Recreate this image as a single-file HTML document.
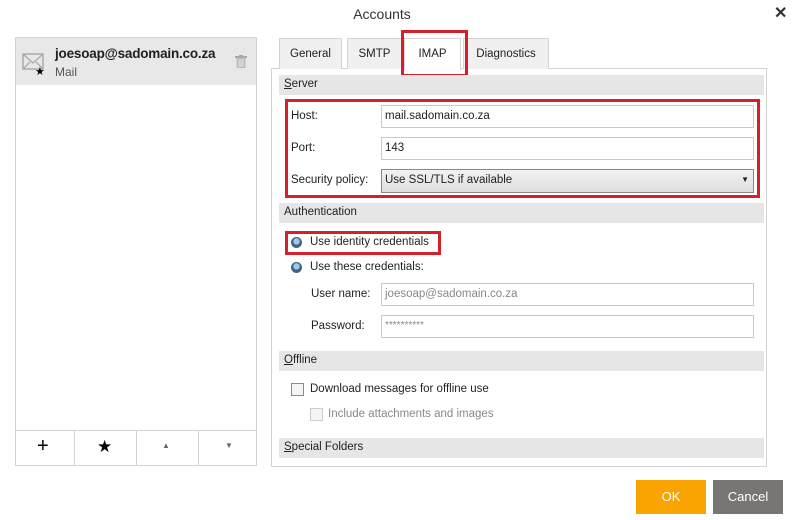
<!DOCTYPE html>
<html><head><meta charset="utf-8"><style>
*{box-sizing:border-box;margin:0;padding:0}
body{width:799px;height:520px;background:#fff;font-family:"Liberation Sans",sans-serif;font-size:11.5px;color:#222;position:relative;overflow:hidden}
.a{position:absolute}
.hdr{position:absolute;left:279px;width:485px;height:20px;background:#e6e6e6;padding:3px 0 0 5px;font-size:11.5px}
.inp{position:absolute;left:381px;width:373px;height:23px;border:1px solid #c9c9c9;background:#fff;padding:4px 0 0 3px;font-size:11.5px}
.tab{position:absolute;top:38px;height:31px;border:1px solid #d4d4d4;border-bottom:none;background:#f0f0f0;text-align:center;padding-top:9px;font-size:11.5px}
.red{position:absolute;border:3px solid #d4202b}
.rad{position:absolute;width:11px;height:11px;border-radius:50%;background:radial-gradient(circle at 50% 40%,#9ec9e8 0 30%,#3f5f7a 45%,#5a6e80 100%)}
.cb{position:absolute;width:13px;height:13px;border:1px solid #8a8a8a;background:#f4f4f4}
</style></head><body>
<div class="a" style="left:0;top:6px;width:764px;text-align:center;font-size:14px;color:#333">Accounts</div>
<div class="a" style="left:774px;top:3px;font-size:16px;font-weight:bold;color:#333">✕</div>

<div class="a" style="left:15px;top:37px;width:242px;height:429px;border:1px solid #d4d4d4"></div>
<div class="a" style="left:16px;top:38px;width:240px;height:47px;background:#e8e8e8"></div>
<svg class="a" style="left:22px;top:52px" width="26" height="24"><rect x="1" y="2" width="20" height="15" fill="none" stroke="#aaa" stroke-width="1.5"/><path d="M1 2 L11 11 L21 2 M1 17 L8 10 M21 17 L14 10" fill="none" stroke="#aaa" stroke-width="1.3"/><text x="13" y="23" font-size="11" fill="#000">★</text></svg>
<div class="a" style="left:55px;top:46px;font-size:13.5px;font-weight:bold;color:#222;letter-spacing:-0.2px">joesoap@sadomain.co.za</div>
<div class="a" style="left:55px;top:65px;font-size:12px;color:#555">Mail</div>
<svg class="a" style="left:235px;top:55px" width="12" height="13"><rect x="0" y="1" width="12" height="2" fill="#aaa"/><rect x="4" y="0" width="4" height="2" fill="#aaa"/><rect x="1.5" y="3" width="9" height="10" fill="#bbb"/><path d="M4 4v8M6 4v8M8 4v8" stroke="#e8e8e8"/></svg>
<div class="a" style="left:15px;top:430px;width:242px;height:1px;background:#d4d4d4"></div>
<div class="a" style="left:74px;top:430px;width:1px;height:36px;background:#d4d4d4"></div>
<div class="a" style="left:136px;top:430px;width:1px;height:36px;background:#d4d4d4"></div>
<div class="a" style="left:198px;top:430px;width:1px;height:36px;background:#d4d4d4"></div>
<div class="a" style="left:37px;top:435px;font-size:20px;color:#000">+</div>
<div class="a" style="left:97px;top:437px;font-size:17px;color:#000">★</div>
<div class="a" style="left:162px;top:441px;font-size:8px;color:#666">▲</div>
<div class="a" style="left:225px;top:441px;font-size:8px;color:#666">▼</div>

<div class="a" style="left:271px;top:68px;width:496px;height:399px;border:1px solid #d4d4d4"></div>
<div class="tab" style="left:279px;width:63px">General</div>
<div class="tab" style="left:347px;width:55px">SMTP</div>
<div class="tab" style="left:404px;width:57px;background:#fff;height:32px">IMAP</div>
<div class="tab" style="left:463px;width:86px">Diagnostics</div>
<div class="red" style="left:401px;top:30px;width:67px;height:47px"></div>

<div class="hdr" style="top:75px"><u>S</u>erver</div>
<div class="a" style="left:291px;top:110px">Host:</div>
<div class="inp" style="top:105px;color:#222">mail.sadomain.co.za</div>
<div class="a" style="left:291px;top:142px">Port:</div>
<div class="inp" style="top:137px">143</div>
<div class="a" style="left:291px;top:174px">Security policy:</div>
<div class="inp" style="top:169px;height:24px;border-color:#888;background:linear-gradient(#f2f2f2,#dedede)">Use SSL/TLS if available<span style="position:absolute;right:4px;top:5px;font-size:8px">▼</span></div>
<div class="red" style="left:285px;top:99px;width:475px;height:99px"></div>

<div class="hdr" style="top:203px">Authentication</div>
<div class="rad" style="left:291px;top:237px"></div>
<div class="a" style="left:310px;top:236px">Use identity credentials</div>
<div class="red" style="left:285px;top:231px;width:156px;height:24px"></div>
<div class="rad" style="left:291px;top:262px"></div>
<div class="a" style="left:310px;top:261px">Use these credentials:</div>
<div class="a" style="left:311px;top:288px">User name:</div>
<div class="inp" style="top:283px;color:#888">joesoap@sadomain.co.za</div>
<div class="a" style="left:311px;top:320px">Password:</div>
<div class="inp" style="top:315px;color:#888;font-size:10px">**********</div>

<div class="hdr" style="top:351px"><u>O</u>ffline</div>
<div class="cb" style="left:291px;top:383px"></div>
<div class="a" style="left:310px;top:383px">Download messages for offline use</div>
<div class="cb" style="left:310px;top:408px;border-color:#ccc"></div>
<div class="a" style="left:328px;top:408px;color:#888">Include attachments and images</div>
<div class="hdr" style="top:438px"><u>S</u>pecial Folders</div>

<div class="a" style="left:636px;top:480px;width:70px;height:34px;background:#f9a400;color:#fff;text-align:center;padding-top:9px;font-size:13px">OK</div>
<div class="a" style="left:713px;top:480px;width:70px;height:34px;background:#777672;color:#fff;text-align:center;padding-top:9px;font-size:13px">Cancel</div>
</body></html>
